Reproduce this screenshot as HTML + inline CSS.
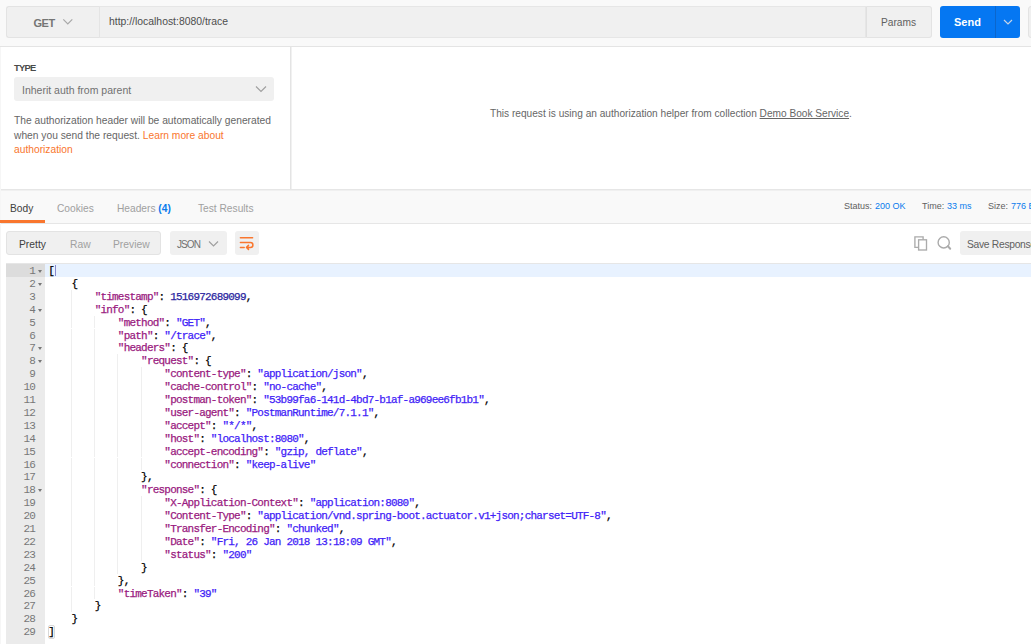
<!DOCTYPE html>
<html><head><meta charset="utf-8">
<style>
html,body{margin:0;padding:0;width:1031px;height:644px;overflow:hidden;background:#fff;font-family:"Liberation Sans",sans-serif;color:#505050;position:relative}
div,span,i{box-sizing:border-box}
.a{position:absolute}
#top{left:0;top:0;width:1031px;height:47px;background:#f9f9f9;border-bottom:1px solid #e4e4e4;box-shadow:0 1px 2px rgba(0,0,0,0.05)}
#method{left:6px;top:6px;width:94px;height:32px;background:#f0f0f0;border:1px solid #e3e3e3;border-right:none;border-radius:3px 0 0 3px}
#url{left:99px;top:6px;width:767px;height:32px;background:#f0f0f0;border:1px solid #e6e6e6;border-left:1px solid #e4e4e4}
#params{left:866px;top:6px;width:66px;height:32px;background:#f0f0f0;border:1px solid #e3e3e3;border-left:1px solid #e0e0e0;border-radius:0 3px 3px 0}
#send{left:940px;top:6px;width:80px;height:32px;background:#0577f2;border-radius:3px}
#save{left:1028px;top:6px;width:20px;height:32px;background:#f0f0f0;border:1px solid #e3e3e3;border-radius:3px}
.t{position:absolute;white-space:nowrap;line-height:1}
#auth{left:0;top:47px;width:1031px;height:143px;background:#fff;border-bottom:1px solid #e6e6e6}
#vdiv{left:290px;top:47px;width:2px;height:142px;background:linear-gradient(90deg,#e4e4e4 50%,#f1f1f1 50%)}
#dd{left:14px;top:77px;width:260px;height:24px;background:#f0f0f0;border-radius:3px}
#tabs{left:0;top:190px;width:1031px;height:34px;background:#f9f9f9;border-bottom:1px solid #e6e6e6;box-shadow:inset 0 1px 0 #f0f0f0}
#uline{left:0;top:220px;width:45px;height:3px;background:#f9762e;z-index:6}
#pretty{left:6px;top:231px;width:155px;height:24px;background:#f0f0f0;border:1px solid #e3e3e3;border-radius:3px}
#json{left:170px;top:231px;width:57px;height:24px;background:#f0f0f0;border-radius:3px}
#wrap{left:235px;top:231px;width:24px;height:24px;background:#f0f0f0;border-radius:3px}
#saveresp{left:960px;top:231px;width:100px;height:24px;background:#f0f0f0;border-radius:3px}
#leftb{left:0;top:47px;width:1px;height:597px;background:#f6f6f6;z-index:5}
#edtop{left:6px;top:263px;width:1025px;height:1px;background:#e6e6e6}
#editor{left:6px;top:264px;width:1025px;height:380px;overflow:hidden}
#gutter{left:0;top:0;width:39px;height:380px;background:#ebebeb}
#actg{left:0;top:0;width:39px;height:13px;background:#dcdcdc}
#actl{left:39px;top:0;width:1000px;height:13px;background:#e8f2ff}
.ln{position:absolute;left:0;width:29px;height:13px;text-align:right;font-family:"Liberation Mono",monospace;font-size:11px;letter-spacing:-0.79px;line-height:13px;color:#777}
.fa{position:absolute;left:32px;width:0;height:0;border-left:2.5px solid transparent;border-right:2.5px solid transparent;border-top:3px solid #777}
.cl{position:absolute;height:13px;white-space:pre;font-family:"Liberation Mono",monospace;font-size:11px;letter-spacing:-0.79px;line-height:13px;color:#000;-webkit-text-stroke:0.25px currentColor}
.k{color:#9a1a80}
.s{color:#3f22f7}
.n{color:#2a1fa0}
.ig{position:absolute;width:1px;height:13px;background:#efefef}
#cursor{left:49px;top:1px;width:1px;height:11px;background:#8888cc}
</style></head><body>
<div id="top" class="a"></div>
<div id="leftb" class="a"></div>
<div id="method" class="a"></div>
<div id="url" class="a"></div>
<div id="params" class="a"></div>
<div id="send" class="a"></div>
<div id="save" class="a"></div>
<div class="t" style="left:33.5px;top:18px;font-size:11px;letter-spacing:-0.45px;color:#757575;font-weight:bold">GET</div>
<svg class="a" style="left:62px;top:18px" width="12" height="8" viewBox="0 0 12 8"><path d="M1.3 1.3 L5.8 6 L10.3 1.3" fill="none" stroke="#a8a8a8" stroke-width="1.2"/></svg>
<div class="t" style="left:109px;top:17px;font-size:10.4px;color:#4d4d4d">http://localhost:8080/trace</div>
<div class="t" style="left:881px;top:18px;font-size:10.2px;color:#606060">Params</div>
<div class="t" style="left:954px;top:17px;font-size:11px;color:#fff;font-weight:bold">Send</div>
<div class="a" style="left:995px;top:6px;width:1px;height:32px;background:#0b66cc"></div>
<svg class="a" style="left:1002.5px;top:18.5px" width="10" height="7" viewBox="0 0 10 7"><path d="M1 1 L5 5 L9 1" fill="none" stroke="#c6d4e6" stroke-width="1.2"/></svg>

<div id="auth" class="a"></div>
<div id="vdiv" class="a"></div>
<div class="t" style="left:14px;top:63px;font-size:9.4px;letter-spacing:-0.75px;color:#4a4a4a;font-weight:bold">TYPE</div>
<div id="dd" class="a"></div>
<div class="t" style="left:22px;top:85px;font-size:10.5px;color:#707070">Inherit auth from parent</div>
<svg class="a" style="left:255px;top:85px" width="12" height="8" viewBox="0 0 12 8"><path d="M1 1.5 L6 6.5 L11 1.5" fill="none" stroke="#a0a0a0" stroke-width="1.2"/></svg>
<div class="t" style="left:14px;top:114px;font-size:10.25px;color:#666666;line-height:14.5px;white-space:normal;width:270px">The authorization header will be automatically generated<br>when you send the request. <span style="color:#f9762e">Learn more about<br>authorization</span></div>
<div class="t" style="left:490px;top:109px;font-size:10.13px;color:#666666">This request is using an authorization helper from collection <span style="text-decoration:underline">Demo Book Service</span>.</div>

<div id="tabs" class="a"></div>
<div id="uline" class="a"></div>
<div class="t" style="left:10px;top:204px;font-size:10.2px;color:#404040">Body</div>
<div class="t" style="left:57px;top:204px;font-size:10.2px;color:#a0a0a0">Cookies</div>
<div class="t" style="left:117px;top:204px;font-size:10.2px;color:#a0a0a0">Headers <span style="color:#097bed;font-weight:bold">(4)</span></div>
<div class="t" style="left:198px;top:204px;font-size:10.2px;color:#a0a0a0">Test Results</div>
<div class="t" style="left:844px;top:202px;font-size:9px;color:#606060">Status:</div>
<div class="t" style="left:875px;top:202px;font-size:9px;color:#097bed">200 OK</div>
<div class="t" style="left:922px;top:202px;font-size:9px;color:#606060">Time:</div>
<div class="t" style="left:947px;top:202px;font-size:9px;color:#097bed">33 ms</div>
<div class="t" style="left:988px;top:202px;font-size:9px;color:#606060">Size:</div>
<div class="t" style="left:1011px;top:202px;font-size:9px;color:#097bed">776 B</div>

<div id="pretty" class="a"></div>
<div class="t" style="left:19px;top:240px;font-size:10.3px;color:#404040">Pretty</div>
<div class="t" style="left:70px;top:240px;font-size:10.3px;color:#a0a0a0">Raw</div>
<div class="t" style="left:113px;top:240px;font-size:10.3px;color:#a0a0a0">Preview</div>
<div id="json" class="a"></div>
<div class="t" style="left:177px;top:240px;font-size:10px;letter-spacing:-0.9px;color:#707070">JSON</div>
<svg class="a" style="left:208px;top:240px" width="11" height="8" viewBox="0 0 11 8"><path d="M1 1.5 L5.5 6 L10 1.5" fill="none" stroke="#a0a0a0" stroke-width="1.2"/></svg>
<div id="wrap" class="a"></div>
<svg class="a" style="left:238px;top:236px" width="18" height="16" viewBox="0 0 18 16"><path d="M2.4 1.7 H14.6 M2.4 6.4 H12.4 A2.5 2.5 0 0 1 12.4 11.4 H9.5 M2.4 11.4 H6.2 M10.5 9.4 L8.5 11.4 L10.5 13.4" fill="none" stroke="#f9762e" stroke-width="1.5" stroke-linecap="round" stroke-linejoin="round"/></svg>
<svg class="a" style="left:905px;top:228px" width="55" height="30" viewBox="0 0 55 30"><path d="M13.6 19.4 H9.9 V8.9 H18.1 V11.8" fill="none" stroke="#ababab" stroke-width="1.35"/><rect x="13.6" y="11.8" width="7.9" height="10.2" fill="none" stroke="#ababab" stroke-width="1.35"/><circle cx="38.7" cy="14.4" r="5.6" fill="none" stroke="#ababab" stroke-width="1.4"/><path d="M42.9 18.3 L45.2 20.7" stroke="#ababab" stroke-width="2" stroke-linecap="round"/></svg>
<div id="saveresp" class="a"></div>
<div class="t" style="left:967px;top:240px;font-size:10.3px;letter-spacing:-0.3px;color:#606060">Save Response</div>

<div id="edtop" class="a"></div>
<div id="editor" class="a">
<div id="gutter" class="a"></div>
<div id="actg" class="a"></div>
<div id="actl" class="a"></div>
<!--CODE-->
<div class="ig" style="top:25.8px;height:12.9px;left:65px"></div>
<div class="ig" style="top:38.7px;height:12.9px;left:65px"></div>
<div class="ig" style="top:51.6px;height:12.9px;left:65px"></div>
<div class="ig" style="top:51.6px;height:12.9px;left:88px"></div>
<div class="ig" style="top:64.5px;height:12.9px;left:65px"></div>
<div class="ig" style="top:64.5px;height:12.9px;left:88px"></div>
<div class="ig" style="top:77.4px;height:12.9px;left:65px"></div>
<div class="ig" style="top:77.4px;height:12.9px;left:88px"></div>
<div class="ig" style="top:90.3px;height:12.9px;left:65px"></div>
<div class="ig" style="top:90.3px;height:12.9px;left:88px"></div>
<div class="ig" style="top:90.3px;height:12.9px;left:111px"></div>
<div class="ig" style="top:103.2px;height:12.9px;left:65px"></div>
<div class="ig" style="top:103.2px;height:12.9px;left:88px"></div>
<div class="ig" style="top:103.2px;height:12.9px;left:111px"></div>
<div class="ig" style="top:103.2px;height:12.9px;left:135px"></div>
<div class="ig" style="top:116.1px;height:12.9px;left:65px"></div>
<div class="ig" style="top:116.1px;height:12.9px;left:88px"></div>
<div class="ig" style="top:116.1px;height:12.9px;left:111px"></div>
<div class="ig" style="top:116.1px;height:12.9px;left:135px"></div>
<div class="ig" style="top:129.0px;height:12.9px;left:65px"></div>
<div class="ig" style="top:129.0px;height:12.9px;left:88px"></div>
<div class="ig" style="top:129.0px;height:12.9px;left:111px"></div>
<div class="ig" style="top:129.0px;height:12.9px;left:135px"></div>
<div class="ig" style="top:141.9px;height:12.9px;left:65px"></div>
<div class="ig" style="top:141.9px;height:12.9px;left:88px"></div>
<div class="ig" style="top:141.9px;height:12.9px;left:111px"></div>
<div class="ig" style="top:141.9px;height:12.9px;left:135px"></div>
<div class="ig" style="top:154.8px;height:12.9px;left:65px"></div>
<div class="ig" style="top:154.8px;height:12.9px;left:88px"></div>
<div class="ig" style="top:154.8px;height:12.9px;left:111px"></div>
<div class="ig" style="top:154.8px;height:12.9px;left:135px"></div>
<div class="ig" style="top:167.7px;height:12.9px;left:65px"></div>
<div class="ig" style="top:167.7px;height:12.9px;left:88px"></div>
<div class="ig" style="top:167.7px;height:12.9px;left:111px"></div>
<div class="ig" style="top:167.7px;height:12.9px;left:135px"></div>
<div class="ig" style="top:180.6px;height:12.9px;left:65px"></div>
<div class="ig" style="top:180.6px;height:12.9px;left:88px"></div>
<div class="ig" style="top:180.6px;height:12.9px;left:111px"></div>
<div class="ig" style="top:180.6px;height:12.9px;left:135px"></div>
<div class="ig" style="top:193.5px;height:12.9px;left:65px"></div>
<div class="ig" style="top:193.5px;height:12.9px;left:88px"></div>
<div class="ig" style="top:193.5px;height:12.9px;left:111px"></div>
<div class="ig" style="top:193.5px;height:12.9px;left:135px"></div>
<div class="ig" style="top:206.4px;height:12.9px;left:65px"></div>
<div class="ig" style="top:206.4px;height:12.9px;left:88px"></div>
<div class="ig" style="top:206.4px;height:12.9px;left:111px"></div>
<div class="ig" style="top:219.3px;height:12.9px;left:65px"></div>
<div class="ig" style="top:219.3px;height:12.9px;left:88px"></div>
<div class="ig" style="top:219.3px;height:12.9px;left:111px"></div>
<div class="ig" style="top:232.2px;height:12.9px;left:65px"></div>
<div class="ig" style="top:232.2px;height:12.9px;left:88px"></div>
<div class="ig" style="top:232.2px;height:12.9px;left:111px"></div>
<div class="ig" style="top:232.2px;height:12.9px;left:135px"></div>
<div class="ig" style="top:245.1px;height:12.9px;left:65px"></div>
<div class="ig" style="top:245.1px;height:12.9px;left:88px"></div>
<div class="ig" style="top:245.1px;height:12.9px;left:111px"></div>
<div class="ig" style="top:245.1px;height:12.9px;left:135px"></div>
<div class="ig" style="top:258.0px;height:12.9px;left:65px"></div>
<div class="ig" style="top:258.0px;height:12.9px;left:88px"></div>
<div class="ig" style="top:258.0px;height:12.9px;left:111px"></div>
<div class="ig" style="top:258.0px;height:12.9px;left:135px"></div>
<div class="ig" style="top:270.9px;height:12.9px;left:65px"></div>
<div class="ig" style="top:270.9px;height:12.9px;left:88px"></div>
<div class="ig" style="top:270.9px;height:12.9px;left:111px"></div>
<div class="ig" style="top:270.9px;height:12.9px;left:135px"></div>
<div class="ig" style="top:283.8px;height:12.9px;left:65px"></div>
<div class="ig" style="top:283.8px;height:12.9px;left:88px"></div>
<div class="ig" style="top:283.8px;height:12.9px;left:111px"></div>
<div class="ig" style="top:283.8px;height:12.9px;left:135px"></div>
<div class="ig" style="top:296.7px;height:12.9px;left:65px"></div>
<div class="ig" style="top:296.7px;height:12.9px;left:88px"></div>
<div class="ig" style="top:296.7px;height:12.9px;left:111px"></div>
<div class="ig" style="top:309.6px;height:12.9px;left:65px"></div>
<div class="ig" style="top:309.6px;height:12.9px;left:88px"></div>
<div class="ig" style="top:322.5px;height:12.9px;left:65px"></div>
<div class="ig" style="top:322.5px;height:12.9px;left:88px"></div>
<div class="ig" style="top:335.4px;height:12.9px;left:65px"></div>
<div class="ln" style="top:1.00px">1</div><i class="fa" style="top:6.0px"></i>
<div class="cl" style="top:1.00px;left:42.15px">[</div>
<div class="ln" style="top:13.90px">2</div><i class="fa" style="top:18.9px"></i>
<div class="cl" style="top:13.90px;left:65.39px">{</div>
<div class="ln" style="top:26.80px">3</div>
<div class="cl" style="top:26.80px;left:88.63px"><span class="k">&quot;timestamp&quot;</span>: <span class="n">1516972689099</span>,</div>
<div class="ln" style="top:39.70px">4</div><i class="fa" style="top:44.7px"></i>
<div class="cl" style="top:39.70px;left:88.63px"><span class="k">&quot;info&quot;</span>: {</div>
<div class="ln" style="top:52.60px">5</div>
<div class="cl" style="top:52.60px;left:111.87px"><span class="k">&quot;method&quot;</span>: <span class="s">&quot;GET&quot;</span>,</div>
<div class="ln" style="top:65.50px">6</div>
<div class="cl" style="top:65.50px;left:111.87px"><span class="k">&quot;path&quot;</span>: <span class="s">&quot;/trace&quot;</span>,</div>
<div class="ln" style="top:78.40px">7</div><i class="fa" style="top:83.4px"></i>
<div class="cl" style="top:78.40px;left:111.87px"><span class="k">&quot;headers&quot;</span>: {</div>
<div class="ln" style="top:91.30px">8</div><i class="fa" style="top:96.3px"></i>
<div class="cl" style="top:91.30px;left:135.11px"><span class="k">&quot;request&quot;</span>: {</div>
<div class="ln" style="top:104.20px">9</div>
<div class="cl" style="top:104.20px;left:158.35px"><span class="k">&quot;content-type&quot;</span>: <span class="s">&quot;application/json&quot;</span>,</div>
<div class="ln" style="top:117.10px">10</div>
<div class="cl" style="top:117.10px;left:158.35px"><span class="k">&quot;cache-control&quot;</span>: <span class="s">&quot;no-cache&quot;</span>,</div>
<div class="ln" style="top:130.00px">11</div>
<div class="cl" style="top:130.00px;left:158.35px"><span class="k">&quot;postman-token&quot;</span>: <span class="s">&quot;53b99fa6-141d-4bd7-b1af-a969ee6fb1b1&quot;</span>,</div>
<div class="ln" style="top:142.90px">12</div>
<div class="cl" style="top:142.90px;left:158.35px"><span class="k">&quot;user-agent&quot;</span>: <span class="s">&quot;PostmanRuntime/7.1.1&quot;</span>,</div>
<div class="ln" style="top:155.80px">13</div>
<div class="cl" style="top:155.80px;left:158.35px"><span class="k">&quot;accept&quot;</span>: <span class="s">&quot;*/*&quot;</span>,</div>
<div class="ln" style="top:168.70px">14</div>
<div class="cl" style="top:168.70px;left:158.35px"><span class="k">&quot;host&quot;</span>: <span class="s">&quot;localhost:8080&quot;</span>,</div>
<div class="ln" style="top:181.60px">15</div>
<div class="cl" style="top:181.60px;left:158.35px"><span class="k">&quot;accept-encoding&quot;</span>: <span class="s">&quot;gzip, deflate&quot;</span>,</div>
<div class="ln" style="top:194.50px">16</div>
<div class="cl" style="top:194.50px;left:158.35px"><span class="k">&quot;connection&quot;</span>: <span class="s">&quot;keep-alive&quot;</span></div>
<div class="ln" style="top:207.40px">17</div>
<div class="cl" style="top:207.40px;left:135.11px">},</div>
<div class="ln" style="top:220.30px">18</div><i class="fa" style="top:225.3px"></i>
<div class="cl" style="top:220.30px;left:135.11px"><span class="k">&quot;response&quot;</span>: {</div>
<div class="ln" style="top:233.20px">19</div>
<div class="cl" style="top:233.20px;left:158.35px"><span class="k">&quot;X-Application-Context&quot;</span>: <span class="s">&quot;application:8080&quot;</span>,</div>
<div class="ln" style="top:246.10px">20</div>
<div class="cl" style="top:246.10px;left:158.35px"><span class="k">&quot;Content-Type&quot;</span>: <span class="s">&quot;application/vnd.spring-boot.actuator.v1+json;charset=UTF-8&quot;</span>,</div>
<div class="ln" style="top:259.00px">21</div>
<div class="cl" style="top:259.00px;left:158.35px"><span class="k">&quot;Transfer-Encoding&quot;</span>: <span class="s">&quot;chunked&quot;</span>,</div>
<div class="ln" style="top:271.90px">22</div>
<div class="cl" style="top:271.90px;left:158.35px"><span class="k">&quot;Date&quot;</span>: <span class="s">&quot;Fri, 26 Jan 2018 13:18:09 GMT&quot;</span>,</div>
<div class="ln" style="top:284.80px">23</div>
<div class="cl" style="top:284.80px;left:158.35px"><span class="k">&quot;status&quot;</span>: <span class="s">&quot;200&quot;</span></div>
<div class="ln" style="top:297.70px">24</div>
<div class="cl" style="top:297.70px;left:135.11px">}</div>
<div class="ln" style="top:310.60px">25</div>
<div class="cl" style="top:310.60px;left:111.87px">},</div>
<div class="ln" style="top:323.50px">26</div>
<div class="cl" style="top:323.50px;left:111.87px"><span class="k">&quot;timeTaken&quot;</span>: <span class="s">&quot;39&quot;</span></div>
<div class="ln" style="top:336.40px">27</div>
<div class="cl" style="top:336.40px;left:88.63px">}</div>
<div class="ln" style="top:349.30px">28</div>
<div class="cl" style="top:349.30px;left:65.39px">}</div>
<div class="ln" style="top:362.20px">29</div>
<div class="cl" style="top:362.20px;left:42.15px">]</div>
<!--/CODE-->
<div id="cursor" class="a"></div>
<div class="a" style="left:42px;top:361px;width:7px;height:14px;border:1px solid #d8d8d8;border-radius:2px"></div>
</div>
</body></html>
